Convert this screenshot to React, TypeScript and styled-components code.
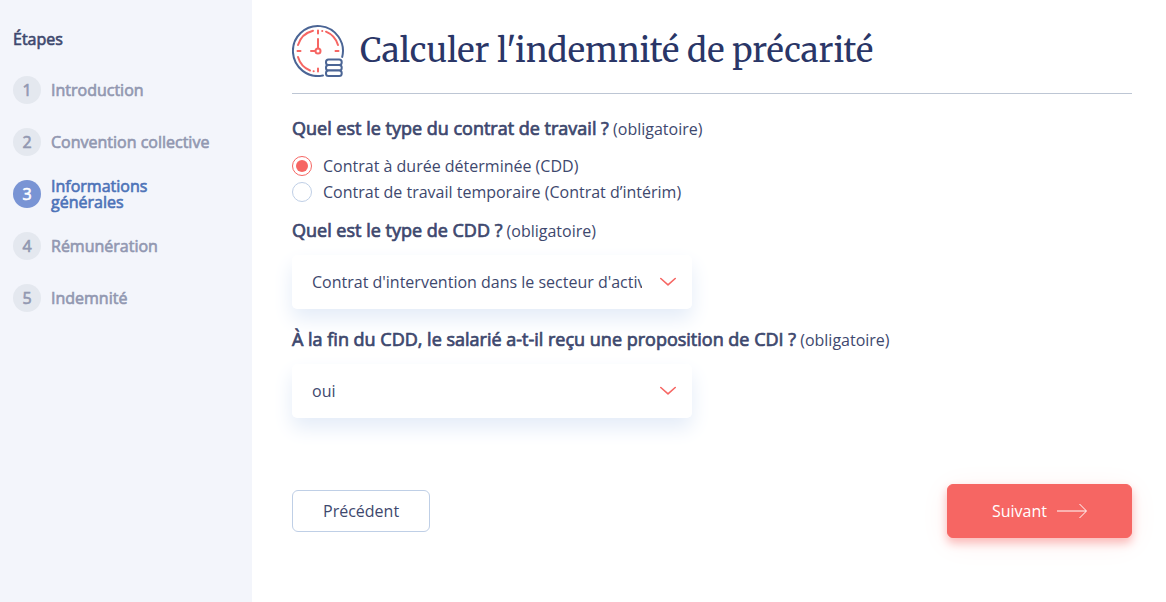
import React, { useState } from "react";
import styled, { createGlobalStyle } from "styled-components";

const colors = {
  text: "#3e486e",
  title: "#2a3667",
  primary: "#f66663",
  border: "#bfcfe6",
  blue: "#4d73b8",
  activeStep: "#7994d4",
  muted: "#9298b1",
  sidebar: "#f3f5fb",
};

const GlobalStyle = createGlobalStyle`
  *, *::before, *::after { box-sizing: border-box; }
  body {
    margin: 0;
    background: #fff;
    color: ${colors.text};
    font-family: "Open Sans", sans-serif;
    font-size: 16px;
    line-height: 26px;
  }
  button, input, select { font: inherit; color: inherit; }
`;

const Page = styled.div`
  display: flex;
  min-height: 100vh;
`;

const Sidebar = styled.nav`
  flex: 0 0 252px;
  padding: 26px 36px 26px 13px;
  background: ${colors.sidebar};
`;

const SidebarTitle = styled.h2`
  margin: 0 0 22px;
  font-size: 16px;
  font-weight: 400;
  line-height: 26px;
  -webkit-text-stroke: 0.04em currentColor;
`;

const Steps = styled.ol`
  display: flex;
  flex-direction: column;
  gap: 20px;
  margin: 0;
  padding: 0;
  list-style: none;
`;

const Step = styled.li<{ $active: boolean }>`
  display: flex;
  align-items: center;
  gap: 10px;
  min-height: 32px;
  line-height: 16px;
  color: ${(p) => (p.$active ? colors.blue : colors.muted)};
  -webkit-text-stroke: 0.04em currentColor;
`;

const StepNumber = styled.span<{ $active: boolean }>`
  display: flex;
  flex: none;
  align-items: center;
  justify-content: center;
  width: 28px;
  height: 28px;
  border-radius: 50%;
  background: ${(p) => (p.$active ? colors.activeStep : "#e4e8ef")};
  color: ${(p) => (p.$active ? "#fff" : colors.muted)};
`;

const Main = styled.main`
  flex: 1;
  min-width: 0;
  padding: 25px 34px 64px 40px;
`;

const Header = styled.header`
  display: flex;
  align-items: center;
  gap: 16px;
  padding-bottom: 16px;
  margin-bottom: 21px;
  border-bottom: 1px solid #bdc6d4;
`;

const Title = styled.h1`
  margin: 0;
  color: ${colors.title};
  font-family: Merriweather, "Liberation Serif", serif;
  font-size: 33px;
  font-weight: 400;
  line-height: 52px;
`;

const RadioGroup = styled.fieldset`
  margin: 0 0 12px;
  padding: 0;
  border: 0;
`;

const SelectGroup = styled.div`
  margin-bottom: 17px;
`;

const Question = styled.span`
  display: block;
  margin-bottom: 11px;
  line-height: 26px;
`;

const Legend = styled.legend`
  padding: 0;
`;

const QuestionText = styled.span`
  font-size: 18px;
  -webkit-text-stroke: 0.04em currentColor;
`;

const RadioLabel = styled.label`
  display: flex;
  align-items: center;
  gap: 11px;
`;

const Radio = styled.input`
  appearance: none;
  display: grid;
  place-items: center;
  flex: none;
  width: 20px;
  height: 20px;
  margin: 0;
  border: 1px solid ${colors.border};
  border-radius: 50%;
  background: #fff;

  &:checked { border-color: ${colors.primary}; }
  &:checked::before {
    content: "";
    width: 12px;
    height: 12px;
    border-radius: 50%;
    background: ${colors.primary};
  }
`;

const SelectBox = styled.div`
  display: grid;
  align-items: center;
  max-width: 400px;
  border-radius: 5px;
  background: #fff;
  box-shadow: 0 10px 20px #e4ecf8;

  > * { grid-area: 1 / 1; }
  > svg { justify-self: end; margin-right: 16px; pointer-events: none; }
`;

const Select = styled.select`
  appearance: none;
  width: 100%;
  height: 54px;
  padding: 0 50px 0 20px;
  border: 0;
  border-radius: 5px;
  background: transparent;
  overflow: hidden;
  text-overflow: clip;
`;

const Actions = styled.div`
  display: flex;
  align-items: center;
  justify-content: space-between;
  margin-top: 66px;
`;

const Button = styled.button`
  padding: 7px 30px;
  border: 1px solid ${colors.border};
  border-radius: 6px;
  background: #fff;
  cursor: pointer;
`;

const PrimaryButton = styled(Button)`
  display: flex;
  align-items: center;
  gap: 10px;
  padding: 13px 44px;
  border-color: ${colors.primary};
  background: ${colors.primary};
  color: #fff;
  box-shadow: 0 5px 10px #fbb9b8, 0 5px 30px #fdf0ef;
`;

const ClockIcon = () => (
  <svg width="52" height="52" viewBox="0 0 52 52" fill="none" strokeWidth="2" aria-hidden="true">
    <path d="M31 50.5A25 25 0 1 1 50.2 32" stroke="#4b6595" strokeLinecap="round" />
    <g stroke={colors.primary} strokeLinecap="round">
      <path d="M26 5.5v3M26 43.5v3M5.5 26h3M43.5 26h3" />
      <path d="M34 6.7A21 21 0 0 1 46 20M6 20A21 21 0 0 1 21 5.7M6 32A21 21 0 0 0 18 45.5" />
      <path d="M30.2 5.9h.1M21.6 46.2h.1" />
      <path d="M26 14v9M19 26h4" />
      <circle cx="26" cy="26" r="2.5" />
    </g>
    <g fill="#fff" stroke="#4b6595">
      <rect x="34" y="34.5" width="15.7" height="5.5" rx="2.5" />
      <rect x="34" y="40" width="15.7" height="5.5" rx="2.5" />
      <rect x="34" y="45.5" width="15.7" height="5.5" rx="2.5" />
    </g>
  </svg>
);

const Chevron = () => (
  <svg width="16" height="10" viewBox="0 0 16 10" fill="none" aria-hidden="true">
    <path d="M.8 1.5 8 7.8l7.2-6.3" stroke={colors.primary} strokeWidth="1.6" strokeLinecap="round" strokeLinejoin="round" />
  </svg>
);

const Arrow = () => (
  <svg width="30" height="16" viewBox="0 0 30 16" fill="none" stroke="#fff" aria-hidden="true">
    <path d="M0 8h29" />
    <path d="m22.5 1 7 7-7 7" strokeLinejoin="round" />
  </svg>
);

const steps = ["Introduction", "Convention collective", "Informations générales", "Rémunération", "Indemnité"];
const contracts = [
  { value: "cdd", label: "Contrat à durée déterminée (CDD)" },
  { value: "interim", label: "Contrat de travail temporaire (Contrat d’intérim)" },
];

export default function App() {
  const [contract, setContract] = useState("cdd");
  const current = 2;

  return (
    <>
      <GlobalStyle />
      <Page>
        <Sidebar aria-label="Étapes">
          <SidebarTitle>Étapes</SidebarTitle>
          <Steps>
            {steps.map((label, i) => (
              <Step key={label} $active={i === current} aria-current={i === current ? "step" : undefined}>
                <StepNumber $active={i === current}>{i + 1}</StepNumber>
                <span>{label}</span>
              </Step>
            ))}
          </Steps>
        </Sidebar>
        <Main>
          <Header>
            <ClockIcon />
            <Title>Calculer l'indemnité de précarité</Title>
          </Header>
          <form onSubmit={(e) => e.preventDefault()}>
            <RadioGroup>
              <Legend>
                <Question>
                  <QuestionText>Quel est le type du contrat de travail ?</QuestionText> (obligatoire)
                </Question>
              </Legend>
              {contracts.map(({ value, label }) => (
                <RadioLabel key={value}>
                  <Radio
                    type="radio"
                    name="contract"
                    value={value}
                    checked={contract === value}
                    onChange={() => setContract(value)}
                  />
                  {label}
                </RadioLabel>
              ))}
            </RadioGroup>
            <SelectGroup>
              <Question as="label" htmlFor="cdd-type">
                <QuestionText>Quel est le type de CDD ?</QuestionText> (obligatoire)
              </Question>
              <SelectBox>
                <Select id="cdd-type">
                  <option>Contrat d'intervention dans le secteur d'activité</option>
                </Select>
                <Chevron />
              </SelectBox>
            </SelectGroup>
            <SelectGroup>
              <Question as="label" htmlFor="cdi-offer">
                <QuestionText>À la fin du CDD, le salarié a-t-il reçu une proposition de CDI ?</QuestionText> (obligatoire)
              </Question>
              <SelectBox>
                <Select id="cdi-offer">
                  <option>oui</option>
                  <option>non</option>
                </Select>
                <Chevron />
              </SelectBox>
            </SelectGroup>
            <Actions>
              <Button type="button">Précédent</Button>
              <PrimaryButton type="submit">
                Suivant
                <Arrow />
              </PrimaryButton>
            </Actions>
          </form>
        </Main>
      </Page>
    </>
  );
}
